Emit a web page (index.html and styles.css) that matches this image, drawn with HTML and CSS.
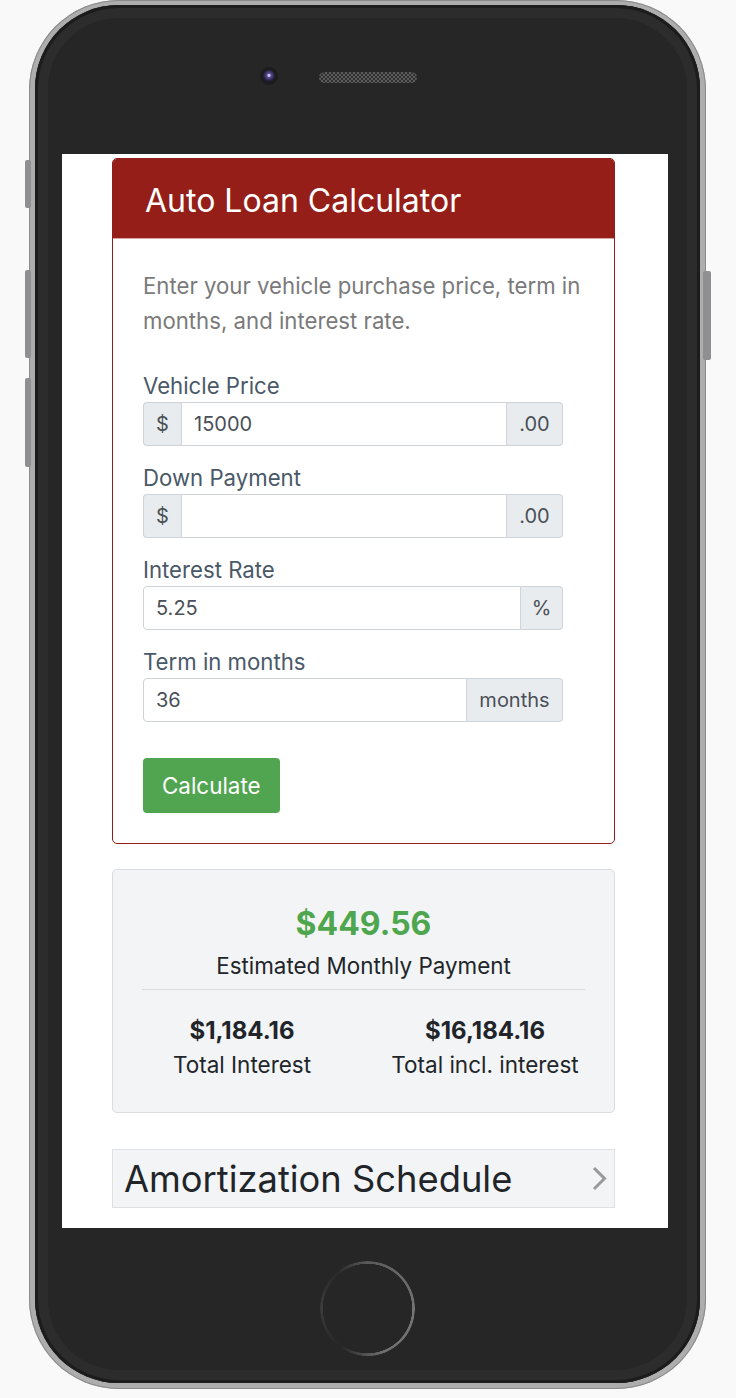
FILE: index.html
```html
<!DOCTYPE html>
<html lang="en">
<head>
<meta charset="utf-8">
<title>Auto Loan Calculator</title>
<link rel="stylesheet" href="styles.css">
</head>
<body>
<div class="stage">
  <div class="phone">
    <span class="side side-mute"></span>
    <span class="side side-vol-up"></span>
    <span class="side side-vol-down"></span>
    <span class="side side-power"></span>
    <div class="bezel">
      <div class="top-bar">
        <span class="camera"><span class="lens"></span></span>
        <span class="speaker"></span>
      </div>
      <div class="screen">
        <div class="content">
          <section class="card">
            <div class="card-header"><h1 class="card-title">Auto Loan Calculator</h1></div>
            <div class="card-body">
              <p class="lead">Enter your vehicle purchase price, term in months, and interest rate.</p>
              <form class="form">
                <div class="field">
                  <label class="label">Vehicle Price</label>
                  <div class="group">
                    <span class="addon addon-pre">$</span>
                    <input class="input" type="text" value="15000">
                    <span class="addon addon-post addon-cents">.00</span>
                  </div>
                </div>
                <div class="field">
                  <label class="label">Down Payment</label>
                  <div class="group">
                    <span class="addon addon-pre">$</span>
                    <input class="input" type="text" value="">
                    <span class="addon addon-post addon-cents">.00</span>
                  </div>
                </div>
                <div class="field">
                  <label class="label">Interest Rate</label>
                  <div class="group">
                    <input class="input input-first" type="text" value="5.25">
                    <span class="addon addon-post addon-pct">%</span>
                  </div>
                </div>
                <div class="field">
                  <label class="label">Term in months</label>
                  <div class="group">
                    <input class="input input-first" type="text" value="36">
                    <span class="addon addon-post addon-months">months</span>
                  </div>
                </div>
                <button class="btn" type="button">Calculate</button>
              </form>
            </div>
          </section>

          <section class="results">
            <div class="payment">$449.56</div>
            <div class="payment-label">Estimated Monthly Payment</div>
            <div class="divider"></div>
            <div class="stats">
              <div class="stat">
                <div class="stat-value">$1,184.16</div>
                <div class="stat-label">Total Interest</div>
              </div>
              <div class="stat">
                <div class="stat-value">$16,184.16</div>
                <div class="stat-label">Total incl. interest</div>
              </div>
            </div>
          </section>

          <div class="amort">
            <h2 class="amort-title">Amortization Schedule</h2>
            <svg class="chevron" width="15" height="25" viewBox="0 0 15 25"><polyline points="2,2 12.5,12.5 2,23" fill="none" stroke="#9a9a9a" stroke-width="3"/></svg>
          </div>
        </div>
      </div>
      <div class="bottom-bar"><span class="home"></span></div>
    </div>
  </div>
</div>
</body>
</html>
```

FILE: styles.css
```css
html, body {
  margin: 0;
  padding: 0;
}
body {
  background: #f9f9f9;
  font-family: Inter, "Noto Sans", sans-serif;
}
.stage {
  padding-left: 29px;
  height: 1398px;
  overflow: hidden;
}
.phone {
  position: relative;
  width: 677px;
  height: 1389px;
  box-sizing: border-box;
  padding: 5px 6px 6px 6px;
  border-radius: 90px;
  background: #adadad;
  box-shadow: inset 0 0 0 1px #8a8a8a;
}
.side {
  position: absolute;
  background: #8e8e93;
  border-radius: 2px;
}
.side-mute { left: -4px; top: 160px; width: 6px; height: 48px; }
.side-vol-up { left: -4px; top: 270px; width: 6px; height: 88px; }
.side-vol-down { left: -4px; top: 378px; width: 6px; height: 89px; }
.side-power { left: 674px; top: 271px; width: 8px; height: 89px; }
.bezel {
  position: relative;
  height: 100%;
  border-radius: 84px;
  background: #262626;
  box-shadow: inset 0 0 0 3px #1c1c1c, inset 0 0 0 13px #2c2c2c;
  display: flex;
  flex-direction: column;
}
.top-bar {
  height: 149px;
  box-sizing: border-box;
  display: flex;
  align-items: flex-start;
  padding-top: 62px;
  padding-left: 225px;
}
.camera {
  width: 18px;
  height: 18px;
  border-radius: 50%;
  background: #1c1c1c;
  display: flex;
  align-items: center;
  justify-content: center;
}
.lens {
  width: 12px;
  height: 12px;
  border-radius: 50%;
  background: radial-gradient(circle at 50% 45%, #d0c8f0 0 1px, #5d5190 2px, #3c3266 4px, #1e1a30 6px);
}
.speaker {
  margin-left: 41px;
  margin-top: 5px;
  width: 98px;
  height: 11px;
  border-radius: 6px;
  background-color: #3a3a3a;
  background-image: conic-gradient(#5c5c5c 25%, #303030 0 50%, #5c5c5c 0 75%, #303030 0);
  background-size: 4px 4px;
}
.screen {
  margin-left: 27px;
  width: 606px;
  height: 1074px;
  background: #fff;
  overflow: hidden;
}
.content {
  padding: 4px 53px 0 50px;
}
.bottom-bar {
  flex: 1;
  display: flex;
  justify-content: center;
  align-items: flex-start;
  padding-top: 33px;
}
.home {
  width: 95px;
  height: 95px;
  border-radius: 50%;
  background: conic-gradient(from 0deg, #5a5a5a, #747474 90deg, #707070 160deg, #262626 215deg, #3c3c3c 270deg, #2a2a2a 320deg, #5a5a5a 360deg);
  -webkit-mask: radial-gradient(circle closest-side, transparent calc(100% - 3px), #000 calc(100% - 2.5px));
  mask: radial-gradient(circle closest-side, transparent calc(100% - 3px), #000 calc(100% - 2.5px));
}

/* card */
.card {
  border: 1px solid #8e1d1d;
  border-radius: 5px;
  overflow: hidden;
}
.card-header {
  height: 80px;
  box-sizing: border-box;
  background: #951f18;
  border-bottom: 1px solid #d4a5a3;
  display: flex;
  align-items: center;
  padding: 3px 0 0 32px;
}
.card-title {
  margin: 0;
  font-size: 32px;
  font-weight: 400;
  color: #fff;
}
.card-body {
  padding: 29px 30px 30px;
}
.lead {
  margin: 0 0 34px;
  color: #7a7a7a;
  font-size: 22.2px;
  line-height: 35px;
}
.form {
  width: 420px;
}
.field {
  margin-bottom: 18px;
}
.label {
  display: block;
  font-size: 22.2px;
  line-height: 28px;
  margin-bottom: 2px;
  color: #4a5968;
}
.group {
  display: flex;
  height: 44px;
}
.addon {
  box-sizing: border-box;
  display: flex;
  align-items: center;
  justify-content: center;
  background: #e9ecef;
  border: 1px solid #ced4da;
  color: #495057;
  font-size: 20px;
}
.addon-pre {
  width: 38px;
  border-right: 0;
  border-radius: 4px 0 0 4px;
}
.addon-post {
  border-left: 0;
  border-radius: 0 4px 4px 0;
}
.addon-cents { width: 56px; }
.addon-pct { width: 42px; }
.addon-months { width: 96px; }
.input {
  flex: 1;
  min-width: 0;
  box-sizing: border-box;
  height: 44px;
  margin: 0;
  border: 1px solid #ced4da;
  background: #fff;
  font-family: inherit;
  font-size: 20px;
  color: #495057;
  padding: 0 12px;
  outline: none;
}
.input-first {
  border-radius: 4px 0 0 4px;
}
.btn {
  margin-top: 18px;
  height: 55px;
  padding: 0 19px;
  background: #51a551;
  color: #fff;
  border: 0;
  border-radius: 4px;
  font-family: inherit;
  font-size: 22.4px;
}

/* results */
.results {
  margin-top: 25px;
  background: #f3f4f6;
  border: 1px solid #dbdcdd;
  border-radius: 5px;
  padding: 29px 29px 30px;
  text-align: center;
  color: #212529;
}
.payment {
  font-size: 32px;
  font-weight: 700;
  line-height: 50px;
  color: #4ea64e;
}
.payment-label {
  font-size: 22.4px;
  line-height: 34px;
}
.divider {
  height: 1px;
  background: #dcdcdc;
  margin: 6px 0 24px;
}
.stats {
  display: grid;
  grid-template-columns: 243px 243px;
  justify-content: center;
  margin: 0 -29px;
}
.stat-value {
  font-size: 24px;
  font-weight: 700;
  line-height: 34px;
}
.stat-label {
  font-size: 22.5px;
  line-height: 34px;
}

/* amortization */
.amort {
  margin-top: 36px;
  height: 59px;
  box-sizing: border-box;
  border: 1px solid #dee0e3;
  background: #f3f4f6;
  display: flex;
  align-items: center;
  justify-content: space-between;
  padding: 0 7px 0 11px;
}
.amort-title {
  margin: 0;
  font-size: 36.3px;
  font-weight: 400;
  color: #212529;
}
.chevron {
  display: block;
}
```
